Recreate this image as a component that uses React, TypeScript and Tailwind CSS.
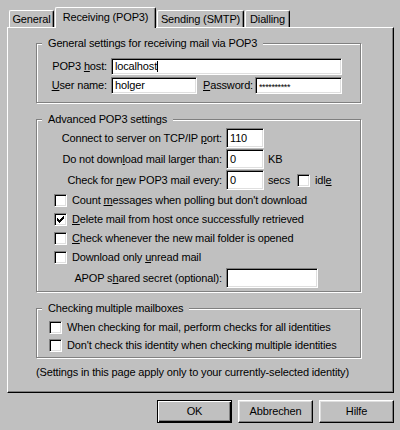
import React from "react";

const sunken =
  "border border-t-[#808080] border-l-[#808080] border-b-white border-r-white shadow-[inset_1px_1px_0_#000,inset_-1px_-1px_0_#dfdfdf] bg-white";

function Field({ className = "", children }: { className?: string; children?: React.ReactNode }) {
  return <div className={`${sunken} flex items-center pl-[3px] shrink-0 overflow-hidden whitespace-nowrap ${className}`}>{children}</div>;
}

function Box({ checked = false }: { checked?: boolean }) {
  return (
    <div className={`${sunken} w-[13px] h-[13px] shrink-0 flex items-center justify-center`}>
      {checked && (
        <svg width="7" height="7" viewBox="0 0 7 7" shapeRendering="crispEdges">
          <path
            fill="#000"
            d="M6 0h1v1h-1zM5 1h2v1h-2zM0 2h1v1h-1zM4 2h3v1h-3zM0 3h2v1h-2zM3 3h3v1h-3zM0 4h5v1h-5zM1 5h3v1h-3zM2 6h1v1h-1z"
          />
        </svg>
      )}
    </div>
  );
}

function Group({ title, className = "", children }: { title: string; className?: string; children?: React.ReactNode }) {
  return (
    <div
      className={`relative ml-[28px] w-[325px] border border-[#808080] shadow-[inset_1px_1px_0_#fff,1px_1px_0_#fff] ${className}`}
    >
      <span className="absolute left-[5px] top-[-7px] px-[6px] bg-[#c0c0c0] leading-[13px] whitespace-nowrap">{title}</span>
      {children}
    </div>
  );
}

function Tab({ children, w }: { children: React.ReactNode; w: string }) {
  return (
    <div
      className={`${w} h-[17px] flex items-center justify-center border-t border-l border-white border-r border-r-black rounded-t-[2px] shadow-[inset_-1px_0_0_#808080] whitespace-nowrap`}
    >
      {children}
    </div>
  );
}

function CheckRow({ children, checked = false, h, pl }: { children: React.ReactNode; checked?: boolean; h: string; pl: string }) {
  return (
    <div className={`flex items-center ${h} ${pl} whitespace-nowrap`}>
      <Box checked={checked} />
      <span className="ml-[5px]">{children}</span>
    </div>
  );
}

function Button({ children, def = false }: { children: React.ReactNode; def?: boolean }) {
  const cls = def
    ? "border border-black shadow-[inset_1px_1px_0_#fff,inset_-1px_-1px_0_#000,inset_-2px_-2px_0_#808080]"
    : "border border-t-white border-l-white border-r-black border-b-black shadow-[inset_-1px_-1px_0_#808080,inset_1px_1px_0_#dfdfdf]";
  return <div className={`w-[75px] h-[23px] flex items-center justify-center ${cls}`}>{children}</div>;
}

export default function App() {
  return (
    <div className="w-[400px] h-[430px] bg-[#c0c0c0] text-black text-[11px] leading-[13px] tracking-[-0.15px] pt-[7px] overflow-hidden [font-family:'Liberation_Sans',Arial,sans-serif]">
      {/* Tabs */}
      <div className="flex items-end gap-[1px] pl-[9px] h-[20px]">
        <Tab w="w-[45px]">General</Tab>
        <div className="relative z-10 w-[101px] h-[21px] -mb-[1px] pb-[2px] flex items-center justify-center bg-[#c0c0c0] border-t border-l border-white border-r border-r-black rounded-t-[2px] shadow-[inset_-1px_0_0_#808080] whitespace-nowrap">
          Receiving (POP3)
        </div>
        <Tab w="w-[87px]">Sending (SMTP)</Tab>
        <Tab w="w-[45px]">Dialling</Tab>
      </div>

      {/* Panel */}
      <div className="ml-[7px] w-[387px] h-[366px] border border-t-white border-l-white border-r-black border-b-black shadow-[inset_-1px_-1px_0_#808080] flex flex-col">
        <Group title="General settings for receiving mail via POP3" className="mt-[15px] pt-[14px] pb-[8px]">
          <div className="flex items-center h-[17px]">
            <div className="w-[74px] pr-[4px] text-right whitespace-nowrap">
              POP3 <u>h</u>ost:
            </div>
            <Field className="w-[231px] h-[17px]">
              localhost
              <span className="inline-block w-[1px] h-[11px] bg-black" />
            </Field>
          </div>
          <div className="flex items-center h-[17px] mt-[2px]">
            <div className="w-[74px] pr-[4px] text-right whitespace-nowrap">
              <u>U</u>ser name:
            </div>
            <Field className="w-[86px] h-[17px]">holger</Field>
            <div className="ml-[6px] w-[52px] whitespace-nowrap">
              <u>P</u>assword:
            </div>
            <Field className="w-[87px] h-[17px]">
              <span className="text-[9px] mt-[3px] tracking-[-0.4px]">**********</span>
            </Field>
          </div>
        </Group>

        <Group title="Advanced POP3 settings" className="mt-[16px] pt-[8px] pb-[3px]">
          <div className="flex items-center h-[20px]">
            <div className="w-[189px] pr-[4px] text-right whitespace-nowrap">
              Connect to server on TCP/IP <u>p</u>ort:
            </div>
            <Field className="w-[38px] h-[20px]">110</Field>
          </div>
          <div className="flex items-center h-[20px] mt-[1px]">
            <div className="w-[189px] pr-[4px] text-right whitespace-nowrap">
              Do not down<u>l</u>oad mail larger than:
            </div>
            <Field className="w-[38px] h-[20px]">0</Field>
            <span className="ml-[4px]">KB</span>
          </div>
          <div className="flex items-center h-[20px] mt-[1px]">
            <div className="w-[189px] pr-[4px] text-right whitespace-nowrap">
              Check for <u>n</u>ew POP3 mail every:
            </div>
            <Field className="w-[38px] h-[20px]">0</Field>
            <span className="ml-[4px]">secs</span>
            <div className="ml-[7px]">
              <Box />
            </div>
            <span className="ml-[5px]">
              idl<u>e</u>
            </span>
          </div>
          <div className="mt-[1px]">
            <CheckRow h="h-[19px]" pl="pl-[17px]">
              Count <u>m</u>essages when polling but don't download
            </CheckRow>
            <CheckRow h="h-[19px]" pl="pl-[17px]" checked>
              <u>D</u>elete mail from host once successfully retrieved
            </CheckRow>
            <CheckRow h="h-[19px]" pl="pl-[17px]">
              <u>C</u>heck whenever the new mail folder is opened
            </CheckRow>
            <CheckRow h="h-[19px]" pl="pl-[17px]">
              Download only <u>u</u>nread mail
            </CheckRow>
          </div>
          <div className="flex items-center h-[20px] mt-[1px]">
            <div className="w-[189px] pr-[4px] text-right whitespace-nowrap">
              APOP s<u>h</u>ared secret (optional):
            </div>
            <Field className="w-[92px] h-[20px]" />
          </div>
        </Group>

        <Group title="Checking multiple mailboxes" className="mt-[16px] pt-[9px] pb-[3px]">
          <CheckRow h="h-[18px]" pl="pl-[12px]">
            When checking for mail, perform checks for all identities
          </CheckRow>
          <CheckRow h="h-[18px]" pl="pl-[12px]">
            Don't check this identity when checking multiple identities
          </CheckRow>
        </Group>

        <div className="mt-[8px] pl-[28px] whitespace-nowrap">
          (Settings in this page apply only to your currently-selected identity)
        </div>
      </div>

      {/* Buttons */}
      <div className="mt-[7px] pl-[157px] flex gap-[6px]">
        <Button def>OK</Button>
        <Button>Abbrechen</Button>
        <Button>Hilfe</Button>
      </div>
    </div>
  );
}
